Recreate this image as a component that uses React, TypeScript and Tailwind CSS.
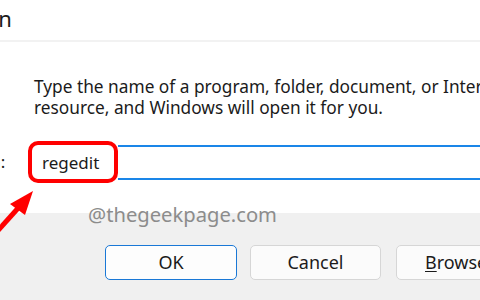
const font = { fontFamily: '"Noto Sans", "Open Sans", sans-serif' }

function App() {
  return (
    <div
      className="relative w-[480px] h-[300px] overflow-hidden bg-white flex flex-col text-[#1b1b1b]"
      style={font}
    >
      {/* title bar, cut off at the left */}
      <div className="h-[42px] shrink-0 border-b-2 border-[#f2f2f2] flex items-center">
        <span className="-ml-[29px] text-[22px] leading-none -mt-[4px]">Run</span>
      </div>

      {/* body */}
      <div className="h-[171px] shrink-0 flex flex-col">
        <p className="pl-[34px] pt-[34px] text-[17.3px] leading-[21px] whitespace-nowrap">
          Type the name of a program, folder, document, or Internet
          <br />
          resource, and Windows will open it for you.
        </p>
        <div className="mt-[23px] flex items-center">
          <span className="-ml-[43px] w-[71px] shrink-0 text-[17px]">Open:</span>
          {/* highlighted part of the text box */}
          <div className="w-[90px] h-[42px] shrink-0 border-[4px] border-[#ff0000] rounded-[10px] bg-white flex items-center pl-[10px] pt-[1px] text-[17px]">
            regedit
          </div>
          <div className="h-[35px] flex-1 border-y-2 border-[#1a86e8]" />
        </div>
      </div>

      {/* footer */}
      <div className="flex-1 bg-[#f0f0f0] flex items-start pt-[32px] pl-[105px] text-[18px]">
        <button className="w-[132px] h-[35px] rounded-[5px] border border-[#1a78d6] bg-[#fdfdfd] shrink-0">
          OK
        </button>
        <button className="ml-[13px] w-[131px] h-[35px] rounded-[5px] border border-[#d6d6d6] bg-[#fbfbfb] shrink-0">
          Cancel
        </button>
        <button className="ml-[15px] w-[131px] h-[35px] rounded-[5px] border border-[#d6d6d6] bg-[#fbfbfb] shrink-0 text-left pl-[28px]">
          <span className="underline underline-offset-2">B</span>rowse...
        </button>
      </div>

      {/* red arrow */}
      <svg className="absolute left-0 top-[185px]" width="40" height="60" viewBox="0 0 40 60">
        <line x1="-6" y1="50" x2="20" y2="21" stroke="#ff0000" strokeWidth="5" />
        <polygon points="33,6 10,19 25,30" fill="#ff0000" />
      </svg>

      {/* watermark */}
      <span className="absolute left-[88px] top-[199px] text-[20.2px] text-[#8c8c8c]">@thegeekpage.com</span>
    </div>
  )
}

export default App
